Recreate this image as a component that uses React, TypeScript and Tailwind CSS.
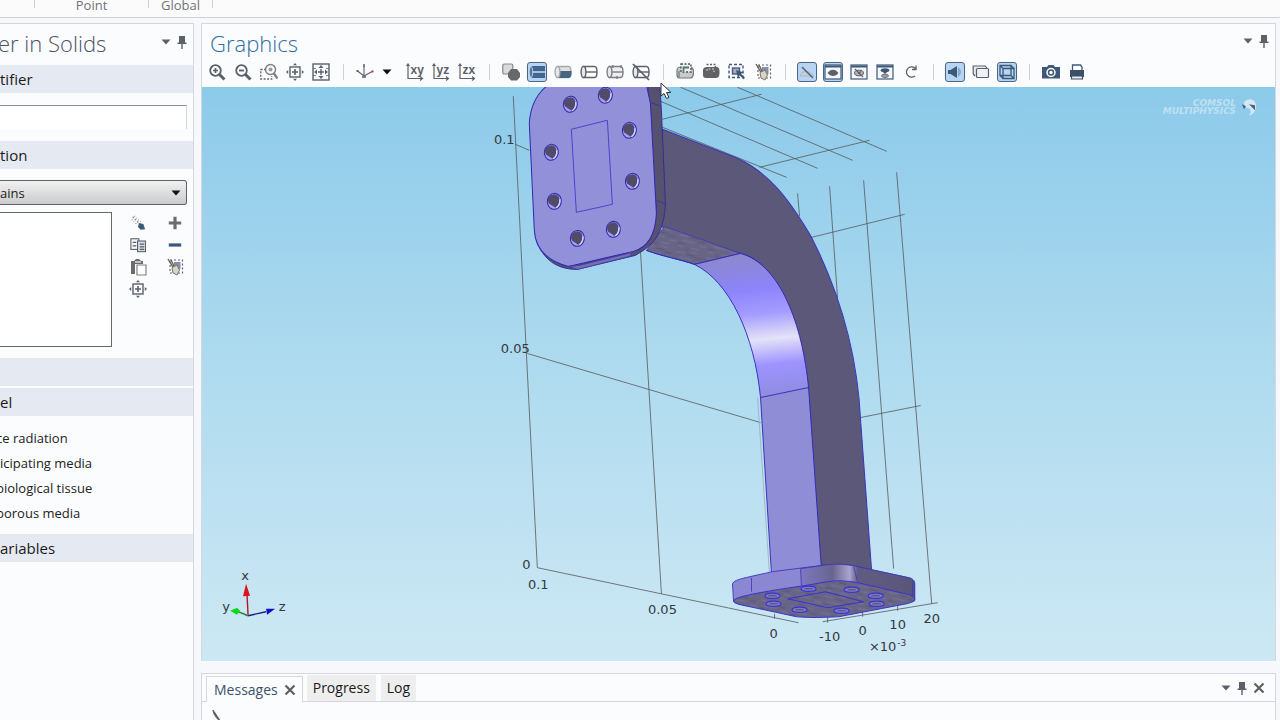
import type { ReactNode } from "react";

const INK = "#5d6068";
const NAVY = "#3d5878";

function Glyph({ children, size = 18 }: { children: ReactNode; size?: number }) {
  return (
    <svg
      className="shrink-0"
      width={size}
      height={size}
      viewBox="0 0 18 18"
      fill="none"
      stroke={INK}
      strokeWidth="1.4"
      aria-hidden="true"
    >
      {children}
    </svg>
  );
}

function Caret({ color = INK }: { color?: string }) {
  return (
    <svg width="10" height="6" viewBox="0 0 10 6" aria-hidden="true">
      <path d="M.5 .5h9L5 5.500z" fill={color} />
    </svg>
  );
}

function Pin() {
  return (
    <svg width="10" height="14" viewBox="0 0 10 14" fill={INK} aria-hidden="true">
      <path d="M2 1h6v6.500h1.500V9h-9V7.500H2zM4.300 9h1.400v5H4.300z" />
    </svg>
  );
}

function Cross() {
  return (
    <svg width="12" height="12" viewBox="0 0 12 12" aria-hidden="true">
      <path d="M1.500 1.500l9 9M10.500 1.500l-9 9" stroke="#606060" strokeWidth="2.200" />
    </svg>
  );
}

function Cylinder({ fill = "none", lower, ticks }: { fill?: string; lower?: string; ticks?: boolean }) {
  return (
    <>
      <path d="M3.500 3.500h11c2 0 2.500 1.500 2.500 5.500s-.5 5.500-2.500 5.500h-11z" fill={fill} />
      {lower && <path d="M6 8h11.500c0 5-.6 7-3 7H5z" fill={lower} stroke="none" />}
      <ellipse cx="3.500" cy="9" rx="2.400" ry="5.500" fill="#e6e8ea" />
      {!lower && <path d="M6 9h11" />}
      {ticks && <path d="M7 2v3M11 13v3M15 2v3" />}
    </>
  );
}

function Axes({ label }: { label: string }) {
  return (
    <Glyph>
      <path d="M2 1v14.500h14M14 13.500l2.500 2-2.500 2M.5 3L2 1l1.500 2" strokeWidth="1.200" />
      <text x="4.500" y="11" fontSize="12" fontWeight="700" fontFamily="Liberation Sans, sans-serif" fill={INK} stroke="none">
        {label}
      </text>
    </Glyph>
  );
}

function WindowFrame({ children }: { children: ReactNode }) {
  return (
    <Glyph>
      <rect x="1" y="2" width="16" height="14" fill="#f4f6f9" stroke={NAVY} strokeWidth="1.200" />
      <path d="M1 3.500h16" stroke={NAVY} strokeWidth="2" />
      {children}
    </Glyph>
  );
}

const eye = <path d="M3.500 10c3-4.500 8-4.500 11 0-3 4-8 4-11 0z" fill={INK} stroke="none" />;

const zoomExtents = (
  <Glyph>
    <rect x="4" y="4" width="10" height="10" />
    <path d="M9 6v6M6 9h6" strokeWidth="1.600" />
    <path d="M9 0l2 2.200H7zM9 18l2-2.200H7zM0 9l2.200-2v4zM18 9l-2.200-2v4z" fill={INK} stroke="none" />
  </Glyph>
);

const clearSelection = (
  <Glyph>
    <rect x="4" y="2" width="12.500" height="13" strokeDasharray="2 2" strokeWidth="1.200" />
    <rect x="8" y="4" width="6.500" height="7" fill="#868daf" stroke="none" />
    <path d="M2 1l6 10M5 2l4 8" stroke="#625f56" strokeWidth="1.400" />
    <path d="M6 9.500l5-2.500 2.500 5-2.500 5-4-2z" fill="#d8d5c6" stroke="#77756b" strokeWidth="1" />
  </Glyph>
);

type Tool = { name: string; icon: ReactNode; on?: boolean };

const groups: Tool[][] = [
  [
    {
      name: "Zoom In",
      icon: (
        <Glyph>
          <circle cx="7.500" cy="7.500" r="5.300" strokeWidth="1.800" />
          <path d="M11.500 11.500L16.500 16.500" strokeWidth="3" />
          <path d="M7.500 5v5M5 7.500h5" strokeWidth="1.700" />
        </Glyph>
      ),
    },
    {
      name: "Zoom Out",
      icon: (
        <Glyph>
          <circle cx="7.500" cy="7.500" r="5.300" strokeWidth="1.800" />
          <path d="M11.500 11.500L16.500 16.500" strokeWidth="3" />
          <path d="M5 7.500h5" strokeWidth="1.900" />
        </Glyph>
      ),
    },
    {
      name: "Zoom Box",
      icon: (
        <Glyph>
          <path d="M6 6.500H.8V16h11v-3" strokeDasharray="2 1.500" strokeWidth="1.300" />
          <circle cx="10.500" cy="6.500" r="5" strokeWidth="1.400" stroke="#7c7e86" />
          <circle cx="10.500" cy="6.500" r="2" fill="#9a9ca2" stroke="none" />
          <path d="M14 10.500l3.500 5" strokeWidth="2.200" stroke="#7c7e86" />
        </Glyph>
      ),
    },
    { name: "Zoom Selected", icon: zoomExtents },
    {
      name: "Zoom Extents",
      icon: (
        <Glyph>
          <rect x="1" y="1" width="16" height="16" />
          <path d="M9 6v6M6 9h6" strokeWidth="1.400" />
          <path d="M9 2l2.500 3h-5zM9 16l2.500-3h-5zM2 9l3-2.500v5zM16 9l-3-2.500v5z" fill={INK} stroke="none" />
          <path d="M1 5.500h3M14 5.500h3M1 12.500h3M14 12.500h3" strokeWidth=".8" />
        </Glyph>
      ),
    },
  ],
  [
    {
      name: "Default View",
      icon: (
        <Glyph>
          <path d="M8 3v10M8 13l9-5M8 13L1.500 8" strokeWidth="1.100" />
          <path d="M8 1v3M6 14h4" strokeWidth="1.500" />
          <path d="M15.500 7.500h2v2h-2z" fill="#b04a4a" stroke="none" />
          <path d="M.5 7h2v2h-2z" fill={INK} stroke="none" />
        </Glyph>
      ),
    },
    { name: "XY View", icon: <Axes label="xy" /> },
    { name: "YZ View", icon: <Axes label="yz" /> },
    { name: "ZX View", icon: <Axes label="zx" /> },
  ],
  [
    {
      name: "Select Objects",
      icon: (
        <Glyph>
          <rect x=".8" y="1" width="10" height="10" rx="1.500" fill="#d9dad9" stroke="#85878b" strokeWidth="1.200" />
          <path d="M9 6h6l3 4v4l-3 3.500H9L6 14v-4z" fill="#66686a" stroke="none" />
        </Glyph>
      ),
    },
    {
      name: "Select Domains",
      on: true,
      icon: (
        <Glyph>
          <path d="M3 3h14v12H3L1 9z" fill="#3f6792" stroke="none" />
          <ellipse cx="3" cy="9" rx="1.700" ry="5.800" fill="#55789c" stroke="#cfe2f4" strokeWidth=".8" />
          <path d="M5 9h12" stroke="#e6f0fa" strokeWidth="1.300" />
        </Glyph>
      ),
    },
    {
      name: "Select Boundaries",
      icon: (
        <Glyph>
          <g stroke="#a5a9ac">
            <Cylinder fill="#dfe1e3" lower="#4a6580" />
          </g>
        </Glyph>
      ),
    },
    { name: "Select Edges", icon: <Glyph><Cylinder fill="#fff" /></Glyph> },
    {
      name: "Select Points",
      icon: (
        <Glyph>
          <g stroke="#7c7f84">
            <Cylinder fill="#eeeeee" ticks />
          </g>
        </Glyph>
      ),
    },
    {
      name: "No Selection",
      icon: (
        <Glyph>
          <Cylinder fill="#fff" />
          <path d="M1 1l16 16" strokeWidth="1.700" />
        </Glyph>
      ),
    },
  ],
  [
    {
      name: "Select Box",
      icon: (
        <Glyph>
          <path d="M1 7c0-2 2-3 4-3h9c3 0 3.500 2 3.500 5s-.5 6-3.500 6H4c-2 0-3-1-3-3z" fill="#c9cbcb" stroke="#75777b" strokeWidth="1.200" />
          <path d="M5 1h10v8H5z" fill="#eef0ee" strokeDasharray="2 1.500" stroke="#456" strokeWidth="1.400" />
          <path d="M7.500 8V4.500H13" stroke="#4f776a" strokeWidth="1.800" />
          <path d="M3 8v6" strokeWidth="1" />
        </Glyph>
      ),
    },
    {
      name: "Deselect Box",
      icon: (
        <Glyph>
          <path d="M1 7c0-2 2-3 4-3h9c3 0 3.500 2 3.500 5s-.5 6-3.500 6H4c-2 0-3-1-3-3z" fill="#606264" stroke="none" />
          <path d="M4.500 1.500h9V8" strokeDasharray="2 1.500" strokeWidth="1.400" />
          <path d="M5 8V6h7v3" stroke="#d0d0d0" strokeDasharray="2 1.500" strokeWidth="1.100" />
        </Glyph>
      ),
    },
    {
      name: "Adjacent Selection",
      icon: (
        <Glyph>
          <rect x="1" y="1.500" width="14" height="13" strokeDasharray="3 2" stroke={NAVY} />
          <rect x="4.500" y="5" width="7" height="6" fill="#a8adc4" stroke="#4d5878" />
          <path d="M8 7l8 2.500-3 1.200 4 4-1.500 1.500-4-4-1.500 3z" fill={NAVY} stroke="none" />
        </Glyph>
      ),
    },
    { name: "Clear Selection", icon: clearSelection },
  ],
  [
    {
      name: "Click and Hide",
      on: true,
      icon: (
        <Glyph>
          <path d="M2 13c1-5 8-7 14 0z" fill="#c1cfdf" stroke="#a2b2c4" strokeWidth=".8" />
          <path d="M4 4l11 11" strokeWidth="1.500" />
        </Glyph>
      ),
    },
    { name: "Show Selected", on: true, icon: <WindowFrame>{eye}</WindowFrame> },
    {
      name: "Hide Selected",
      icon: (
        <WindowFrame>
          <ellipse cx="9" cy="10" rx="4.500" ry="2.800" fill="#b0b4ba" strokeWidth="1" />
          <path d="M5 6l8 8M8 10.500l3-2" strokeWidth="1.200" />
        </WindowFrame>
      ),
    },
    {
      name: "View Hidden",
      icon: (
        <WindowFrame>
          <ellipse cx="9" cy="7.300" rx="4.300" ry="2" fill={NAVY} stroke="none" />
          <path d="M7 9h4l-2 2z" fill="#555" stroke="none" />
          <ellipse cx="9" cy="12.800" rx="3.500" ry="1.700" fill="#9ba1aa" strokeWidth=".8" />
        </WindowFrame>
      ),
    },
    {
      name: "Reset Hiding",
      icon: (
        <Glyph>
          <path d="M13.500 5.500A5.200 5.200 0 1 0 13 13M14 2.500V6.500H10" strokeWidth="1.300" />
        </Glyph>
      ),
    },
  ],
  [
    {
      name: "Scene Light",
      on: true,
      icon: (
        <Glyph>
          <path d="M2 7h2.500l6.500-4v12l-6.500-4H2z" fill={NAVY} stroke="none" />
          <path d="M12.500 5c2.500 1.500 2.500 6.500 0 8z" fill="#7fa9cf" stroke="#7fa9cf" strokeWidth="1" />
        </Glyph>
      ),
    },
    {
      name: "Transparency",
      icon: (
        <Glyph>
          <path d="M3 13L1.200 11V3h12l2 2.500" fill="#e6e9ee" strokeWidth="1.200" />
          <rect x="4.500" y="5.500" width="12" height="9" rx="1" fill="#eef1f6" strokeWidth="1.200" />
        </Glyph>
      ),
    },
    {
      name: "Wireframe Rendering",
      on: true,
      icon: (
        <Glyph>
          <path d="M2 2.500h11v10H2zM5 5.500h11v10H5zM2 2.500l3 3M13 2.500l3 3M2 12.500l3 3M13 12.500l3 3" stroke={NAVY} strokeWidth="1.300" />
        </Glyph>
      ),
    },
  ],
  [
    {
      name: "Image Snapshot",
      icon: (
        <Glyph>
          <path d="M0 4h5l1.500-2h5L13 4h5v11.500H0z" fill={NAVY} stroke="none" />
          <circle cx="9" cy="9.500" r="4" fill={NAVY} stroke="#fff" strokeWidth="1.500" />
          <circle cx="9" cy="9.500" r="1.700" fill="#fff" stroke="none" />
        </Glyph>
      ),
    },
    {
      name: "Print",
      icon: (
        <Glyph>
          <path d="M4.500 8V2h8l1.500 2v4" stroke={NAVY} strokeWidth="1.300" fill="#fff" />
          <path d="M2 7h14v7H2z" fill="#3c4f66" stroke="none" />
          <path d="M3.500 13h11v3h-11z" fill="#e8ebf0" stroke="#3c4f66" strokeWidth="1.200" />
        </Glyph>
      ),
    },
  ],
];

function ToolButton({ name, icon, on }: Tool) {
  return (
    <button type="button" aria-label={name} className="flex w-[26px] items-center justify-center">
      <span
        className={
          on
            ? "flex size-5 items-center justify-center rounded-[3px] border border-[#4b6584] bg-[#b7d5f2]"
            : "flex size-5 items-center justify-center"
        }
      >
        {icon}
      </span>
    </button>
  );
}

function Toolbar() {
  return (
    <div role="toolbar" aria-label="Graphics" className="flex h-[29px] shrink-0 items-center pb-0.5 pl-0.5">
      {groups.map((tools, g) => (
        <div key={g} className="flex items-center">
          {g > 0 && (
            <span className="flex w-[18px] justify-center">
              <span className="h-4 w-px bg-[#cfcfd6]" />
            </span>
          )}
          {tools.map((tool, i) => (
            <div key={tool.name} className="flex">
              <ToolButton {...tool} />
              {g === 1 && i === 0 && (
                <button type="button" aria-label="Go to view" className="mr-1.5 flex w-[18px] items-center justify-center">
                  <Caret color="#111" />
                </button>
              )}
            </div>
          ))}
        </div>
      ))}
    </div>
  );
}

const gridLines = [
  "M513 96L537 567L798 622",
  "M640 250L661 593",
  "M515 144L529 150",
  "M527 353L760 422",
  "M822 621L937 602",
  "M797 193L799 216",
  "M829 186L837 298",
  "M863 180L893 568",
  "M896 172L931 603",
  "M811 237L904 214",
  "M860 417L920 405",
  "M737 87L886 151",
  "M680 87L852 160",
  "M660 101L817 168",
  "M662 127L786 177",
  "M662 119L761 94",
  "M759 167L869 140",
  "M774 613v5M827 616v6M862 610v6M897 605v5",
];

const faceHoles = [
  [570, 104], [605, 95], [629, 130], [632, 181], [613, 229], [577, 238], [554, 201], [551, 152],
];

const baseHoles = [
  [772, 595], [808, 588], [851, 589], [875, 595], [876, 603], [841, 610], [799, 609], [773, 603],
];

const axisLabels: [number, number, string][] = [
  [504, 144, "0.1"], [515, 353, "0.05"], [526, 568, "0"], [538, 588, "0.1"], [662, 613, "0.05"],
  [773, 637, "0"], [829, 640, "-10"], [862, 634, "0"], [897, 628, "10"], [931, 622, "20"],
];

function Scene() {
  return (
    <svg
      className="block h-full w-full"
      viewBox="202 87 1072 573"
      role="img"
      aria-label="Waveguide bend geometry"
      fontFamily="DejaVu Sans, sans-serif"
    >
      <defs>
        <linearGradient id="bend" gradientUnits="userSpaceOnUse" x1="735" y1="255" x2="750" y2="398">
          <stop offset="0" stopColor="#8c88cc" />
          <stop offset=".25" stopColor="#8d84fb" />
          <stop offset=".42" stopColor="#a49cff" />
          <stop offset=".6" stopColor="#e5e2f7" />
          <stop offset=".78" stopColor="#9d93ff" />
          <stop offset="1" stopColor="#8f8de0" />
        </linearGradient>
        <linearGradient id="rim" gradientUnits="userSpaceOnUse" x1="800" y1="0" x2="914" y2="0">
          <stop offset="0" stopColor="#7e79c0" />
          <stop offset=".28" stopColor="#68648f" />
          <stop offset=".43" stopColor="#aaa5cf" />
          <stop offset=".5" stopColor="#605b82" />
          <stop offset="1" stopColor="#5a567a" />
        </linearGradient>
        <pattern id="grain" width="31" height="17" patternUnits="userSpaceOnUse" patternTransform="rotate(12)">
          <rect width="31" height="17" fill="#686485" />
          <path d="M0 3h9M15 1h7M4 8h13M22 10h7M1 14h5M14 14h9" stroke="#736f93" strokeWidth="1.500" />
          <path d="M11 4h8M0 11h6M20 6h7M8 16h4" stroke="#5e5a78" strokeWidth="1.500" />
        </pattern>
      </defs>

      <g fill="none" stroke="#57595b" strokeWidth=".8">
        {gridLines.map((d) => (
          <path key={d} d={d} />
        ))}
      </g>

      <path d="M662 129L737 158C767 172 787 196 811 237C839 292 857 355 860 420L871 570H820L808 392C802 335 780 262 740 253L660 226z" fill="#5b5879" stroke="#3b35bd" />
      <path d="M646 250L664 226L740 253L694 264C680 259 662 256 646 250z" fill="url(#grain)" stroke="#4038bb" strokeWidth=".8" />
      <path d="M694 264L740 253C780 264 802 325 808 387L760 397C754 335 729 281 694 264z" fill="url(#bend)" />
      <path d="M760 397L808 387L821 570L771 574z" fill="#8f8dd6" />
      <path d="M646 250C662 256 680 259 694 264C729 281 754 335 760 397L771 574M740 253C780 264 802 325 808 387L821 570M694 264L740 253M760 397L808 387" fill="none" stroke="#2d25ba" strokeWidth=".9" />
      <path d="M757 397L769 574" stroke="#9eabc0" strokeWidth=".8" />

      <path d="M647 80H659L661 110L665 203C664 225 658 240 643 250L635 255L577 269C556 269 543 259 536 240L633 251L656 213z" fill="#55516f" stroke="#302999" strokeWidth=".9" />
      <path d="M545 87C555 80 560 80 566 80H645L650 103L656 213C655 233 648 247 633 251L568 266C545 260 535 248 534 230L529 123C530 107 536 95 545 87z" fill="#9290d8" stroke="#2f28b2" />
      <path d="M568 266L579 265L632 252L629 256L577 269z" fill="#7772ab" stroke="#3a33b4" strokeWidth=".7" />
      <path d="M650 102L660 106M656 200L666 204" stroke="#342dac" strokeWidth=".8" />
      <path d="M571 129L607 120L612 204L576 212z" fill="none" stroke="#433bcc" strokeWidth=".9" />
      {faceHoles.map(([x, y]) => (
        <g key={`${x}-${y}`} transform={`translate(${x} ${y}) rotate(10)`}>
          <ellipse rx="7" ry="8" fill="#a39ef0" stroke="#3028b4" strokeWidth="1" />
          <path d="M-5.500-4C-2-9 5-8 5 0C5 4 3 6 2 6L-5 3C-7 0-7-2-5.500-4z" fill="#4f4b68" />
          <path d="M5-3C6 1 5 4 3 6" fill="none" stroke="#dad6ff" strokeWidth="1.200" />
        </g>
      ))}

      <path d="M732 583C734 579 740 578 772 571L827 564C840 563 848 564 857 566L908 577C912 578 914 580 914 583V598L853 590L733 600z" fill="#8b87d2" stroke="#3c35bd" strokeWidth=".9" />
      <path d="M800 568L827 564C840 563 848 564 857 566L908 577C912 578 914 580 914 583V598L853 584L801 588z" fill="url(#rim)" stroke="#3c35bd" strokeWidth=".8" />
      <path d="M751 577V591M912 580V595M853 566L857 581" stroke="#3c35bd" strokeWidth=".8" />
      <path d="M733 600C736 594 780 589 827 581C840 579 850 580 862 583L909 594C917 598 916 601 906 603L838 616C822 617 806 617 796 616L740 604C736 603 733 602 733 600z" fill="url(#grain)" stroke="#3c35cf" />
      <path d="M787 598L825 591L863 601L827 607z" fill="none" stroke="#3a32d0" />
      {baseHoles.map(([x, y]) => (
        <g key={`${x}-${y}`}>
          <ellipse cx={x} cy={y} rx="7.500" ry="2.600" fill="#7f7ab5" stroke="#3a32df" strokeWidth="1.200" />
          <path d={`M${x - 4} ${y}h8`} stroke="#5a5580" strokeWidth="1.200" />
        </g>
      ))}

      <g fontSize="13" fill="#35393d" textAnchor="middle">
        {axisLabels.map(([x, y, label]) => (
          <text key={`${x}-${y}`} x={x} y={y}>
            {label}
          </text>
        ))}
        <text x="882" y="650">
          ×10
        </text>
        <text x="901" y="645" fontSize="9">
          -3
        </text>
        <text x="245" y="579">x</text>
        <text x="226" y="610">y</text>
        <text x="282" y="610">z</text>
      </g>

      <path d="M248 614L247 594" stroke="#b01820" strokeWidth="1.400" />
      <path d="M246 583l4 12-7 .5z" fill="#e0101c" />
      <path d="M248 615L266 611" stroke="#202080" strokeWidth="1.400" />
      <path d="M275 608l-8 6-1-6z" fill="#1010c8" />
      <path d="M248 615L238 611" stroke="#208030" strokeWidth="1.400" />
      <path d="M230 610l7-3 3 3-3 4z" fill="#10d820" />

      <g fill="#bfe0f3" fontSize="9" fontStyle="italic" fontWeight="700" textAnchor="end">
        <text x="1235" y="106">COMSOL</text>
        <text x="1235" y="114">MULTIPHYSICS</text>
      </g>
      <path d="M1243 102c3-4 9-4 11 0c3 5-1 13-6 13c3-3 2-5 0-7c-3 0-5-2-5-6z" fill="#d5e8f2" />
      <path d="M1241 104l4 2-2 3zM1248 104l6 1v5l-3-3z" fill="#46647b" />
    </svg>
  );
}

function SectionBar({ children }: { children?: ReactNode }) {
  return <h2 className="flex h-7 shrink-0 items-center bg-[#e5e9f2] text-[15px] leading-5">{children}</h2>;
}

function IconButton({ name, children }: { name: string; children: ReactNode }) {
  return (
    <button type="button" aria-label={name} className="flex h-[22px] w-full items-center justify-center">
      {children}
    </button>
  );
}

function Settings() {
  return (
    <aside className="flex w-[194px] shrink-0 flex-col overflow-hidden border-t border-r border-[#d5d6de] bg-[#fbfcfe]">
      <header className="flex h-[41px] shrink-0 items-center justify-between">
        <h1 className="-ml-0.5 pb-1 text-[22px] leading-8 font-light whitespace-nowrap text-[#4a5361]">er in Solids</h1>
        <div className="mr-1.5 mb-1.5 flex items-center gap-1.5">
          <button type="button" aria-label="Panel menu"><Caret /></button>
          <button type="button" aria-label="Pin panel"><Pin /></button>
        </div>
      </header>
      <SectionBar>tifier</SectionBar>
      <div className="h-12 shrink-0 pt-3 pr-1.5">
        <input aria-label="Identifier" className="block h-6 w-full border-t border-r border-t-[#8d8f94] border-r-[#d4d6dc] bg-white" />
      </div>
      <SectionBar>tion</SectionBar>
      <div className="pt-[11px] pr-1.5">
        <div className="relative flex">
          <select
            aria-label="Selection"
            className="h-[25px] w-full appearance-none rounded-r-[3px] border border-l-0 border-[#606266] bg-linear-to-b from-[#f1f1f1] to-[#cccccd] text-[13px] leading-5"
          >
            <option>ains</option>
          </select>
          <span className="pointer-events-none absolute top-2.5 right-1.5 flex">
            <Caret color="#111" />
          </span>
        </div>
      </div>
      <div className="mt-[7px] flex h-[146px] shrink-0">
        <div role="listbox" aria-label="Selected domains" className="h-[135px] w-28 shrink-0 border border-l-0 border-[#66686c] bg-white" />
        <div className="ml-[7px] w-[38px] shrink-0">
          <IconButton name="Activate Selection">
            <Glyph size={16}>
              <path d="M3 2l9 9" stroke="#8b8d92" strokeDasharray="2 1.500" strokeWidth="1.500" />
              <path d="M5 1l8 8M2 5l6 6" stroke="#8b8d92" strokeDasharray="1 2" strokeWidth="1.200" />
              <path d="M10 9l5 1 2 6-5 .5-3-3z" fill={NAVY} stroke="none" />
            </Glyph>
          </IconButton>
          <IconButton name="Copy Selection">
            <Glyph size={16}>
              <rect x="1" y="2" width="9" height="12" fill="#f3f3f5" strokeWidth="1.200" />
              <path d="M3 6h4M3 10h4" strokeWidth="1.500" />
              <rect x="8.500" y="4.500" width="9" height="12" fill="#d4d9e6" strokeWidth="1.200" />
              <path d="M11 8h5M11 11h5M11 14h5" strokeWidth="1.400" />
            </Glyph>
          </IconButton>
          <IconButton name="Paste Selection">
            <Glyph>
              <path d="M2 3h3l2-2h3l2 2h2v3H6v10H2z" fill="#696b6f" stroke="none" />
              <path d="M8 7h9v10H8z" fill="#fff" stroke="#808287" strokeWidth="1.200" />
              <path d="M6 4h6" stroke="#e8e8e8" />
            </Glyph>
          </IconButton>
          <IconButton name="Zoom to Selection">{zoomExtents}</IconButton>
        </div>
        <div className="min-w-0 flex-1">
          <IconButton name="Add">
            <Glyph size={16}><path d="M9 2v14M2 9h14" stroke="#6a6c70" strokeWidth="3.600" /></Glyph>
          </IconButton>
          <IconButton name="Remove">
            <Glyph size={16}><path d="M2 9h14" stroke={NAVY} strokeWidth="3.600" /></Glyph>
          </IconButton>
          <IconButton name="Clear">{clearSelection}</IconButton>
        </div>
      </div>
      <SectionBar />
      <div className="mt-0.5">
        <SectionBar>el</SectionBar>
      </div>
      <ul className="pt-2.5 pb-2 text-[13px] leading-[25px] text-[#222]">
        <li className="-ml-1">ce radiation</li>
        <li>icipating media</li>
        <li className="-ml-1">biological tissue</li>
        <li className="-ml-1">porous media</li>
      </ul>
      <SectionBar>ariables</SectionBar>
    </aside>
  );
}

export default function App() {
  return (
    <div className="flex h-screen flex-col overflow-hidden bg-[#f7f8fb] font-['Open_Sans','Noto_Sans',sans-serif] text-[#1b1b1b]">
      <div className="flex h-[18px] shrink-0 border-b border-[#cfd0d6] bg-[#fbfbfc] text-[13px] leading-[10px] text-[#707278]">
        <span className="h-2 w-[35px] border-r border-[#cfd0d6]" />
        <span className="h-2 w-[114px] border-r border-[#cfd0d6] text-center">Point</span>
        <span className="h-2 w-16 border-r border-[#cfd0d6] text-center">Global</span>
      </div>

      <div className="flex min-h-0 flex-1 gap-[7px] pt-[5px]">
        <Settings />

        <div className="flex min-w-0 flex-1 flex-col gap-3 pr-1">
          <section className="relative flex min-h-0 flex-1 flex-col border border-b-0 border-[#d5d6de] bg-[#fbfcfe]">
            <header className="flex h-[34px] shrink-0 items-center justify-between pl-2">
              <h2 className="pt-1 text-[22px] leading-7 font-light text-[#2f6f9f]">Graphics</h2>
              <div className="mr-1.5 flex items-center gap-1.5">
                <button type="button" aria-label="Graphics menu"><Caret /></button>
                <button type="button" aria-label="Pin graphics"><Pin /></button>
              </div>
            </header>
            <Toolbar />
            <div className="min-h-0 flex-1 bg-linear-to-b from-[#8ccaea] via-[#afdbef] to-[#cde8f4]">
              <Scene />
            </div>
            <svg className="pointer-events-none absolute top-[58px] left-[458px]" width="12" height="18" viewBox="0 0 12 18" aria-hidden="true">
              <path d="M1 1v13l3-2.500 2.500 5 2.500-1-2.500-5H11z" fill="#fff" stroke="#333" />
            </svg>
          </section>

          <section className="flex h-[47px] shrink-0 flex-col border border-b-0 border-[#d5d6de] bg-[#fbfcfe]">
            <div className="flex h-7 shrink-0 items-end justify-between">
              <div role="tablist" className="flex h-full flex-1 items-end text-sm leading-5">
                <span className="h-full w-1 border-b border-[#d5d6de]" />
                <div className="flex h-[26px] items-center gap-1.5 border border-b-0 border-[#d5d6de] pr-1.5 pl-[7px]">
                  <button type="button" role="tab" aria-selected="true" className="text-[#3f516b]">Messages</button>
                  <button type="button" aria-label="Close Messages"><Cross /></button>
                </div>
                <div className="flex h-full flex-1 items-end gap-[5px] border-b border-[#d5d6de] pl-1">
                  <button type="button" role="tab" aria-selected="false" className="h-[26px] bg-[#eeeeef] px-1.5">Progress</button>
                  <button type="button" role="tab" aria-selected="false" className="h-[26px] bg-[#eeeeef] px-1.5">Log</button>
                </div>
              </div>
              <div className="flex h-full items-center gap-1.5 border-b border-[#d5d6de] pr-2.5">
                <button type="button" aria-label="Messages menu"><Caret /></button>
                <button type="button" aria-label="Pin messages"><Pin /></button>
                <button type="button" aria-label="Close panel"><Cross /></button>
              </div>
            </div>
            <svg className="mt-2 ml-2.5 shrink-0" width="12" height="14" viewBox="0 0 12 14" aria-hidden="true">
              <path d="M1 0c1 5 4 8 9 13M2 2l6 9" fill="none" stroke="#606266" strokeWidth="1.500" />
            </svg>
          </section>
        </div>
      </div>
    </div>
  );
}
